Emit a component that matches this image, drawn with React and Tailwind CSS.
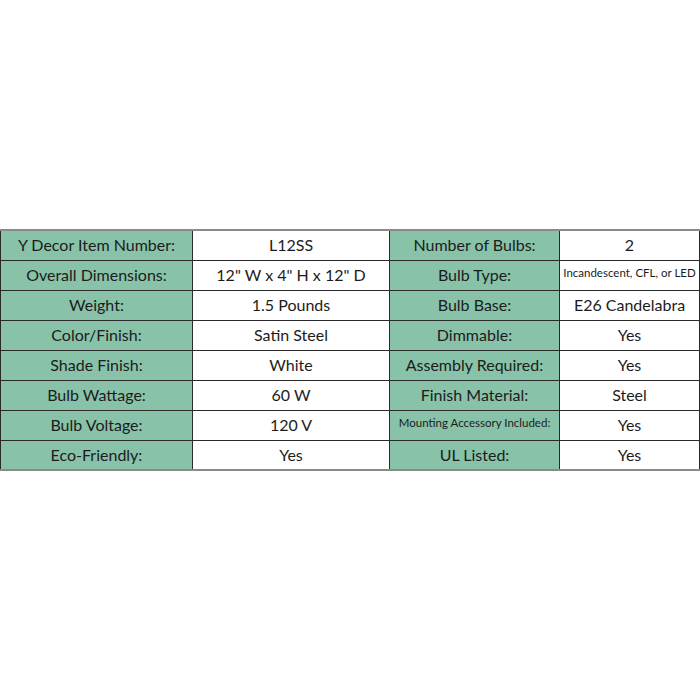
import React from "react";

const rows = [
  ["Y Decor Item Number:", "L12SS", "Number of Bulbs:", "2"],
  ["Overall Dimensions:", "12\" W x 4\" H x 12\" D", "Bulb Type:", "Incandescent, CFL, or LED"],
  ["Weight:", "1.5 Pounds", "Bulb Base:", "E26 Candelabra"],
  ["Color/Finish:", "Satin Steel", "Dimmable:", "Yes"],
  ["Shade Finish:", "White", "Assembly Required:", "Yes"],
  ["Bulb Wattage:", "60 W", "Finish Material:", "Steel"],
  ["Bulb Voltage:", "120 V", "Mounting Accessory Included:", "Yes"],
  ["Eco-Friendly:", "Yes", "UL Listed:", "Yes"],
];

const small = ["Incandescent, CFL, or LED", "Mounting Accessory Included:"];

const Cell = ({ text, green, w }) => {
  const isSmall = small.includes(text);
  return (
    <td
      className={`border border-[#2a2a2a] text-center h-[30px] p-0 ${w} ${
        green ? "bg-[#88c2a8]" : "bg-white"
      } ${isSmall ? "text-[11.5px] align-top pt-[3px]" : "text-[16px] align-middle"}`}
    >
      {text}
    </td>
  );
};

export default function App() {
  return (
    <div className="w-[700px] h-[700px] bg-white flex flex-col justify-center font-['Lato','Open_Sans',sans-serif] text-[#1c1c1c]">
      <table className="border-collapse w-[699px] table-fixed border-t-2 border-t-[#8a8a8a] border-b-2 border-b-[#8a8a8a]">
        <tbody>
          {rows.map((r, i) => (
            <tr key={i}>
              <Cell text={r[0]} green w="w-[192px]" />
              <Cell text={r[1]} w="w-[197px]" />
              <Cell text={r[2]} green w="w-[170px]" />
              <Cell text={r[3]} w="w-[140px]" />
            </tr>
          ))}
        </tbody>
      </table>
    </div>
  );
}
